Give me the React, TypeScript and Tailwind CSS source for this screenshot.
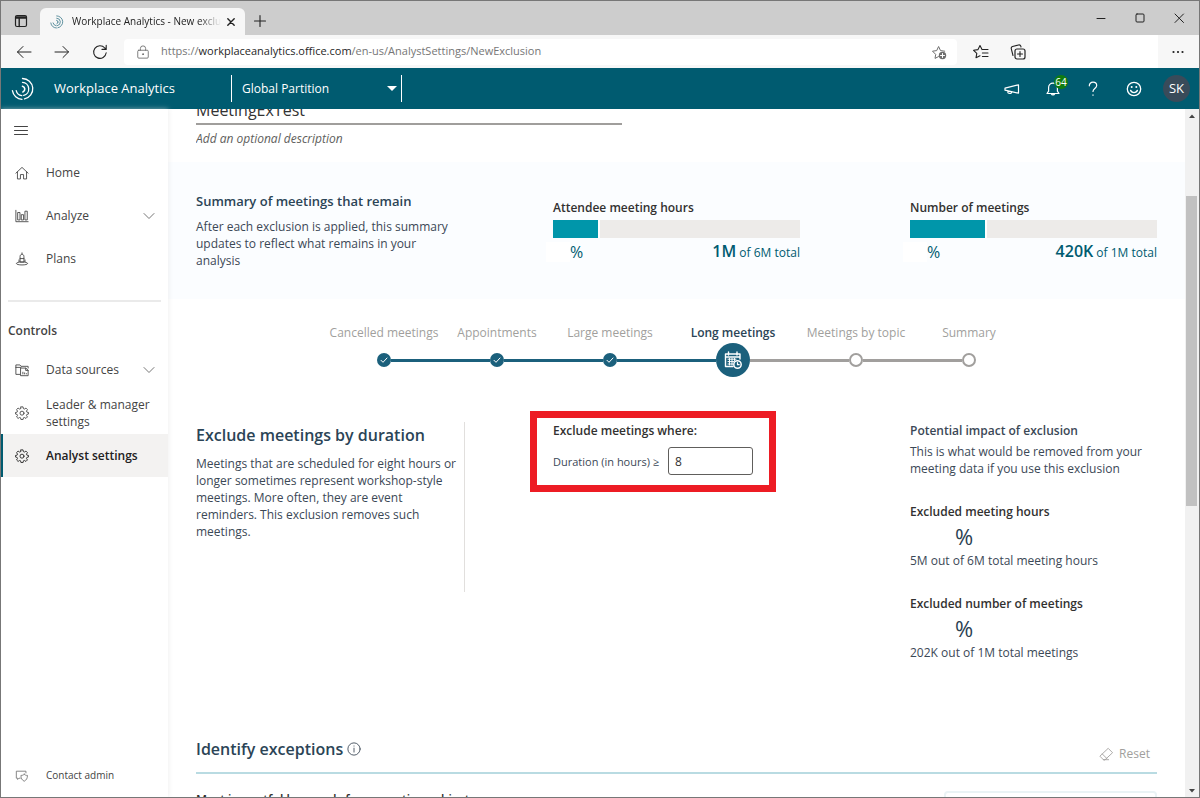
import React, { useState } from 'react';
import clsx from 'clsx';

interface IconProps {
    className?: string;
}

interface NavItem {
    label: string;
    icon: React.ReactNode;
    expandable?: boolean;
    active?: boolean;
}

interface Step {
    label: string;
    state: 'done' | 'current' | 'todo';
}

interface MeterProps {
    title: string;
    percent: number;
    amount: string;
    total: string;
}

interface ImpactProps {
    title: string;
    detail: string;
}

function Svg({ className = 'size-4', box = 16, children }: IconProps & { box?: number; children: React.ReactNode }) {
    return (
        <svg
            viewBox={`0 0 ${box} ${box}`}
            className={clsx('shrink-0', className)}
            fill="none"
            stroke="currentColor"
            strokeLinecap="round"
            strokeLinejoin="round"
            aria-hidden="true"
        >
            {children}
        </svg>
    );
}

function Logo({ className }: IconProps) {
    return (
        <Svg className={className} box={24}>
            <path d="M11.5 1.5a10.3 10.3 0 0 1 2 20.4M11 22.3a10.3 10.3 0 0 1-9.600-8.600" strokeWidth="1.3" />
            <path d="M11.5 5.400a6.600 6.600 0 0 1 1.200 13M10.800 18.600a6.600 6.600 0 0 1-5.600-5" strokeWidth="1.3" />
            <path d="M11.5 9.200a3 3 0 0 1 .4 5.700" strokeWidth="1.600" />
        </Svg>
    );
}

const HomeIcon = () => (
    <Svg className="size-3.5">
        <path d="M1 8.2 8 1.6l7 6.6M2.8 6.8v8h3.4v-5h3.6v5h3.4v-8" />
    </Svg>
);

const AnalyzeIcon = () => (
    <Svg className="size-3.5">
        <path d="M1 1.5v13h14M3.5 4h2.2v8.5H3.5zM7.6 6.5h2.2v6H7.6zM11.8 2.5H14v10h-2.2z" />
    </Svg>
);

const PlansIcon = () => (
    <Svg className="size-3.5">
        <path d="M8 1v1.5M5.8 11V5.2C5.8 3.6 6.8 2.6 8 2.6s2.2 1 2.2 2.6V11zM5.800 7.500h4.400" />
        <path d="M4.6 9v2.5h6.8V9M4.2 11.7c-1.6.3-2.6.8-2.6 1.4 0 1 2.8 1.7 6.4 1.7s6.4-.7 6.4-1.7c0-.6-1-1.1-2.6-1.4" />
    </Svg>
);

const DataIcon = () => (
    <Svg className="size-3.5">
        <path d="M5.5 13H1V2.2h4.6l1.3 1.6H15v2M1 5h5.8" />
        <path d="M6.8 5.8h5.6L15 8.3v6.2H6.8zM12.2 6v2.5H15M9 12.5v-2M11 12.5v-1.2M13 12.5v-.4" />
    </Svg>
);

const GearIcon = () => (
    <Svg className="size-3.5">
        <path d="m6.8 1h2.4l.4 2 1.1.5 1.8-1.1 1.7 1.7-1.1 1.8.5 1.1 1.9.4v1.7l-1.9.5-.5 1.1 1.1 1.8-1.7 1.7-1.8-1.1-1.1.4-.4 2H6.8l-.4-2-1.1-.4-1.8 1.1-1.7-1.7 1.1-1.8-.5-1.1-1.9-.5V7.4L2.4 7l.5-1.1-1.1-1.8 1.7-1.7 1.8 1.1L6.4 3z" />
        <circle cx="8" cy="8.2" r="2.3" />
    </Svg>
);

const ContactIcon = () => (
    <Svg className="size-3.5 text-[#767676]">
        <path d="M6 10.5H4.500L3 12v-1.500H1.500v-8h11v2" />
        <path d="M10.500 6c1 1 2.200 1.400 3.700 1.300.1 3.200-1.100 5.300-3.700 6.700-2.600-1.400-3.800-3.500-3.700-6.700C8.300 7.400 9.500 7 10.500 6z" />
    </Svg>
);

const mainNav: NavItem[] = [
    { label: 'Home', icon: <HomeIcon /> },
    { label: 'Analyze', icon: <AnalyzeIcon />, expandable: true },
    { label: 'Plans', icon: <PlansIcon /> }
];

const controlsNav: NavItem[] = [
    { label: 'Data sources', icon: <DataIcon />, expandable: true },
    { label: 'Leader & manager settings', icon: <GearIcon /> },
    { label: 'Analyst settings', icon: <GearIcon />, active: true }
];

const steps: Step[] = [
    { label: 'Cancelled meetings', state: 'done' },
    { label: 'Appointments', state: 'done' },
    { label: 'Large meetings', state: 'done' },
    { label: 'Long meetings', state: 'current' },
    { label: 'Meetings by topic', state: 'todo' },
    { label: 'Summary', state: 'todo' }
];

function BrowserChrome() {
    return (
        <div className="shrink-0">
            <div className="flex h-[34px] items-center bg-[#cdcdcd] pl-[13px] text-[#222]">
                <button type="button" aria-label="Tab actions" className="mt-1.5">
                    <Svg className="size-3.5" box={14}>
                        <rect x="1.5" y="1.5" width="11" height="11" rx="1.5" strokeWidth="1.2" />
                        <path d="M2 3h10M2 4h10M5.2 4.5v8" strokeWidth="1.4" />
                    </Svg>
                </button>
                <div className="ml-3 flex h-[27px] w-[205px] items-center self-end rounded-t-md bg-[#f7f7f7] pr-2 pl-2.5">
                    <Logo className="size-3.5 text-[#2f7284]" />
                    <span className="ml-2 flex-1 mask-r-from-85% text-[10px] whitespace-nowrap">
                        Workplace Analytics - New exclu
                    </span>
                    <button type="button" aria-label="Close tab" className="ml-1">
                        <Svg className="size-3" box={12}>
                            <path d="m2.8 2.8 6.4 6.4M9.2 2.8 2.8 9.2" strokeWidth="1.4" />
                        </Svg>
                    </button>
                </div>
                <button type="button" aria-label="New tab" className="mt-1.5 ml-2">
                    <Svg className="size-3.5" box={14}>
                        <path d="M7 1.5v11M1.5 7h11" strokeWidth="1.1" />
                    </Svg>
                </button>
                <div className="mr-[13px] ml-auto flex gap-[25px]">
                    <button type="button" aria-label="Minimize">
                        <Svg className="size-3.5" box={14}><path d="M3 7.5h8" /></Svg>
                    </button>
                    <button type="button" aria-label="Maximize">
                        <Svg className="size-3.5" box={14}><rect x="3" y="3" width="8" height="8" rx="1" /></Svg>
                    </button>
                    <button type="button" aria-label="Close">
                        <Svg className="size-3.5" box={14}><path d="m3 3 8.5 8.5M11.5 3 3 11.5" /></Svg>
                    </button>
                </div>
            </div>

            <div className="flex h-[33px] items-center bg-[#f7f7f7] text-[#222]">
                <div className="flex items-center gap-[22px] pl-[15px]">
                    <button type="button" aria-label="Back">
                        <Svg><path d="M15 8H1.5M7 2.5 1.5 8 7 13.5" /></Svg>
                    </button>
                    <button type="button" aria-label="Forward">
                        <Svg><path d="M1 8h13.5M9 2.5 14.5 8 9 13.5" /></Svg>
                    </button>
                    <button type="button" aria-label="Refresh">
                        <Svg><path d="M14.2 8.8A6.3 6.3 0 1 1 12.8 4L14 5.2M14.2 1.2v4.2H10" strokeWidth="1.1" /></Svg>
                    </button>
                </div>
                <div className="ml-4 flex h-[26px] flex-1 items-center rounded bg-white px-2.5 text-[#6e6e6e]">
                    <Svg className="ml-0.5 size-3.5">
                        <rect x="2" y="6" width="12" height="9" rx="1.2" />
                        <path d="M5 6V4a3 3 0 0 1 6 0v2" />
                        <circle cx="8" cy="10.5" r=".6" fill="currentColor" />
                    </Svg>
                    <span className="ml-[11px] flex-1 text-[11px] text-[#767676]">
                        https://<span className="text-[#1f1f1f]">workplaceanalytics.office.com</span>/en-us/AnalystSettings/NewExclusion
                    </span>
                    <button type="button" aria-label="Add to favorites">
                        <Svg>
                            <path d="M7.5 12.6 4 14.4l.7-4L1.5 7.2l4.2-.6L7.6 2.5l1.9 4.1 4.2.6" />
                            <circle cx="11.5" cy="11.5" r="3.7" fill="currentColor" stroke="none" />
                            <path d="M11.5 9.5v4M9.5 11.5h4" stroke="white" />
                        </Svg>
                    </button>
                </div>
                <div className="flex h-full items-center gap-[21px] pr-1 pl-4">
                    <button type="button" aria-label="Favorites">
                        <Svg>
                            <path d="m9 5.6-2-4-2 4-4.4.7 3.2 3.1-.8 4.4 4-2M9.4 5.5H15M9.4 9H15M9.4 12.5H15" strokeWidth="1.1" />
                        </Svg>
                    </button>
                    <button type="button" aria-label="Collections">
                        <Svg>
                            <rect x="5" y="5" width="10" height="10" rx="2" strokeWidth="1.2" />
                            <path d="M10 7.5v5M7.5 10h5M3 11.500 1.300 4.800c-.3-1.200.2-2 1.200-2.300l6-1.500c1.200-.3 2 .2 2.300 1.200l.2.800" strokeWidth="1.1" />
                        </Svg>
                    </button>
                </div>
                <div className="h-full w-[128px] bg-white" />
                <button type="button" aria-label="Settings and more" className="pr-[9px] pl-2">
                    <Svg className="size-6" box={24}>
                        <path d="M7.5 12h.01M12 12h.01M16.5 12h.01" strokeWidth="2.2" />
                    </Svg>
                </button>
            </div>
        </div>
    );
}

function AppHeader() {
    return (
        <header className="flex h-[41px] shrink-0 items-center bg-[#005b70] pl-2.5 text-white">
            <Logo className="size-6" />
            <span className="ml-[19px] w-[177px] text-[13px] font-medium">Workplace Analytics</span>
            <div className="relative flex h-[27px] w-[171px] items-center border-x border-white">
                <select
                    aria-label="Partition"
                    className="h-full w-full appearance-none bg-transparent pl-2.5 text-[12px] font-medium outline-none"
                >
                    <option>Global Partition</option>
                </select>
                <svg viewBox="0 0 10 5" className="pointer-events-none absolute right-1 h-[5px] w-2.5" fill="currentColor" aria-hidden="true">
                    <path d="M0 0h10L5 5z" />
                </svg>
            </div>
            <div className="mr-[9px] ml-auto flex items-center">
                <button type="button" aria-label="Announcements">
                    <Svg><path d="M1 7.2v2l13.5 3V3.8zM3.8 9.8v1.4c0 1.5 3.800 1.500 3.800.2v-.8" strokeWidth="1.2" /></Svg>
                </button>
                <button type="button" aria-label="Notifications" className="relative ml-[25px]">
                    <Svg>
                        <path d="M2 12.5h12l-1.6-2.3V6.5a4.4 4.4 0 0 0-8.8 0v3.7zM6.3 12.7a1.8 1.8 0 0 0 3.4 0" strokeWidth="1.2" />
                    </Svg>
                    <span className="absolute -top-1.5 left-[9px] flex size-3.5 items-center justify-center rounded-full bg-[#107c10] text-[10px] leading-none font-medium">
                        64
                    </span>
                </button>
                <button type="button" aria-label="Help" className="ml-6">
                    <Svg>
                        <path d="M4.3 4.8C4.3 2.7 5.8 1.2 8 1.2s3.7 1.3 3.7 3.3c0 2.9-3.7 3.2-3.7 6M8 13.8v.5" strokeWidth="1.2" />
                    </Svg>
                </button>
                <button type="button" aria-label="Feedback" className="ml-[25px]">
                    <Svg>
                        <circle cx="8" cy="8" r="6.7" strokeWidth="1.3" />
                        <path d="M4.6 9.300c1 3 5.800 3 6.800 0" strokeWidth="1.3" />
                        <path d="M5.7 6h.01M10.3 6h.01" strokeWidth="2" />
                    </Svg>
                </button>
                <span className="ml-[21px] flex size-[27px] items-center justify-center rounded-full bg-[#394b5a] text-[13px]">SK</span>
            </div>
        </header>
    );
}

function NavList({ items }: { items: NavItem[] }) {
    return (
        <ul>
            {items.map((item) => (
                <li key={item.label}>
                    <a
                        href="#"
                        className={clsx(
                            'flex h-[43px] items-center border-l-2 pr-[13px] pl-3',
                            item.active ? 'border-[#005b70] bg-[#f3f2f1] font-semibold text-[#212121]' : 'border-transparent'
                        )}
                    >
                        {item.icon}
                        <span className="ml-[17px] flex-1">{item.label}</span>
                        {item.expandable && (
                            <Svg className="size-3 text-[#767676]" box={12}>
                                <path d="M1 3.500 6 8.500l5-5" />
                            </Svg>
                        )}
                    </a>
                </li>
            ))}
        </ul>
    );
}

function Sidebar() {
    return (
        <nav className="relative z-10 flex w-[167px] shrink-0 flex-col bg-white text-[12px] leading-[17px] text-[#444] shadow-[0_0_5px_#dddddd99]">
            <button type="button" aria-label="Toggle navigation" className="flex h-[42px] items-center pl-[13px]">
                <Svg className="size-3.5" box={14}>
                    <path d="M.5 3.500h13M.5 7.500h13M.5 11.500h13" />
                </Svg>
            </button>
            <NavList items={mainNav} />
            <div className="my-5 mr-[7px] ml-[7px] h-0.5 bg-[#eaeaea]" />
            <h2 className="mb-2 pl-[7px] leading-[18px] font-semibold">Controls</h2>
            <NavList items={controlsNav} />
            <a href="#" className="mt-auto flex h-[43px] items-center pl-3.5 text-[10px]">
                <ContactIcon />
                <span className="ml-[17px]">Contact admin</span>
            </a>
        </nav>
    );
}

function Meter({ title, percent, amount, total }: MeterProps) {
    return (
        <div className="pt-[7px]">
            <h3 className="text-[12px] leading-[17px] font-semibold text-[#323130]">{title}</h3>
            <div className="mt-1 h-[18px] bg-[#edebe9]">
                <div className="h-full border-r-2 border-white bg-[#0096aa]" style={{ width: `${percent}%` }} />
            </div>
            <div className="mt-[3px] flex items-center leading-5 text-[#005b70]">
                <span className="-ml-[7px] h-5 w-6 bg-white" />
                <span className="text-[16px]">%</span>
                <span className="ml-auto text-[12px]">
                    <span className="text-[16px] font-semibold">{amount}</span> of {total} total
                </span>
            </div>
        </div>
    );
}

function StepMarker({ state }: { state: Step['state'] }) {
    if (state === 'done') {
        return (
            <span className="flex size-3.5 items-center justify-center rounded-full bg-[#1b607c] text-white">
                <Svg className="size-2.5" box={10}><path d="M2 5.3 4 7.3 8 3" /></Svg>
            </span>
        );
    }
    if (state === 'current') {
        return (
            <span className="flex size-[34px] items-center justify-center rounded-full bg-[#1b607c] text-white">
                <Svg className="size-[18px]" box={18}>
                    <path d="M16 8V3H1.5v12.5H9M1.5 6H16M4.5 1v3M13 1v3" strokeWidth="1.4" />
                    <path d="M4 8.2h8M4 10.6h6M4 13h4.5M5.5 7.5V14M8 7.500V14M10.500 7.500v2" />
                    <circle cx="13.5" cy="13.5" r="3.7" fill="#1b607c" strokeWidth="1.5" />
                    <path d="M13.5 11.5v2.200h1.700" strokeWidth="1.2" />
                </Svg>
            </span>
        );
    }
    return <span className="size-3.5 rounded-full border-2 border-[#a19f9d] bg-white" />;
}

function Stepper() {
    return (
        <ol className="flex justify-center pt-[25px]">
            {steps.map((step, i) => {
                const current = step.state === 'current';
                return (
                    <li key={step.label} className={clsx('text-center', current ? 'w-[133px]' : 'w-[113px]')}>
                        <p
                            className={clsx(
                                'text-[12px] leading-[17px] whitespace-nowrap',
                                current ? 'font-semibold text-[#2b4456]' : 'text-[#a19f9d]'
                            )}
                        >
                            {step.label}
                        </p>
                        <div className="mt-0.5 flex h-[34px] items-center">
                            <span className={clsx('h-[3px] flex-1', i === 0 ? '' : step.state === 'todo' ? 'bg-[#a19f9d]' : 'bg-[#1b607c]')} />
                            <StepMarker state={step.state} />
                            <span className={clsx('h-[3px] flex-1', i === steps.length - 1 ? '' : step.state === 'done' ? 'bg-[#1b607c]' : 'bg-[#a19f9d]')} />
                        </div>
                    </li>
                );
            })}
        </ol>
    );
}

function Impact({ title, detail }: ImpactProps) {
    return (
        <div className="mt-[26px]">
            <h4 className="font-semibold text-[#323130]">{title}</h4>
            <p className="mt-0.5 mb-0.5 pl-[45px] text-[22px] leading-7 text-[#2b3f52]">%</p>
            <p>{detail}</p>
        </div>
    );
}

function App() {
    const [name, setName] = useState('MeetingExTest');
    const [description, setDescription] = useState('');
    const [duration, setDuration] = useState('8');

    return (
        <div className="flex h-screen flex-col overflow-hidden border border-[#777] bg-white font-['Open_Sans',sans-serif]">
            <BrowserChrome />
            <AppHeader />
            <div className="flex min-h-0 flex-1">
                <Sidebar />
                <main className="min-w-0 flex-1 overflow-hidden text-[12px] leading-[17px] text-[#3b4856]">
                    <div className="-mt-3.5 flex flex-col px-7 pb-[15px]">
                        <input
                            aria-label="Exclusion name"
                            value={name}
                            onChange={(e) => setName(e.target.value)}
                            className="h-[30px] w-[426px] border-b-2 border-[#a09e9c] pt-0.5 text-[16px] text-[#333] outline-none"
                        />
                        <input
                            aria-label="Description"
                            placeholder="Add an optional description"
                            value={description}
                            onChange={(e) => setDescription(e.target.value)}
                            className="mt-1 h-[18px] w-[426px] italic outline-none placeholder:text-[#605e5c]"
                        />
                    </div>

                    <section className="grid h-[137px] grid-cols-3 gap-x-[110px] bg-[#fbfdff] px-7 pt-[30px]">
                        <div className="whitespace-nowrap">
                            <h2 className="text-[13px] leading-[18px] font-semibold text-[#2b4456]">Summary of meetings that remain</h2>
                            <p className="mt-2">
                                After each exclusion is applied, this summary
                                <br />
                                updates to reflect what remains in your
                                <br />
                                analysis
                            </p>
                        </div>
                        <Meter title="Attendee meeting hours" percent={19} amount="1M" total="6M" />
                        <Meter title="Number of meetings" percent={31} amount="420K" total="1M" />
                    </section>

                    <Stepper />

                    <section className="mt-[45px] grid grid-cols-3 gap-x-[110px] px-7">
                        <div className="-mr-[22px] min-h-[170px] self-start border-r border-[#e1dfdd] whitespace-nowrap">
                            <h2 className="text-[16px] leading-[26px] font-semibold text-[#2b4456]">Exclude meetings by duration</h2>
                            <p className="mt-[7px]">
                                Meetings that are scheduled for eight hours or
                                <br />
                                longer sometimes represent workshop-style
                                <br />
                                meetings. More often, they are event
                                <br />
                                reminders. This exclusion removes such
                                <br />
                                meetings.
                            </p>
                        </div>
                        <div className="-mt-[11px] -mr-[23px] -ml-[23px] w-[246px] self-start border-7 border-[#ed1c24] px-4 pt-1 pb-2.5">
                            <h3 className="font-semibold text-[#323130]">Exclude meetings where:</h3>
                            <div className="mt-2 flex items-center">
                                <label htmlFor="duration" className="flex-1 text-[11px] whitespace-nowrap">Duration (in hours) ≥</label>
                                <input
                                    id="duration"
                                    value={duration}
                                    onChange={(e) => setDuration(e.target.value)}
                                    className="h-7 w-[85px] rounded-[3px] border border-[#605e5c] px-1.5 text-[#323130] outline-none"
                                />
                            </div>
                        </div>
                        <div>
                            <h3 className="font-semibold">Potential impact of exclusion</h3>
                            <p className="mt-1">This is what would be removed from your meeting data if you use this exclusion</p>
                            <Impact title="Excluded meeting hours" detail="5M out of 6M total meeting hours" />
                            <Impact title="Excluded number of meetings" detail="202K out of 1M total meetings" />
                        </div>
                    </section>

                    <section className="mx-7 mt-[75px]">
                        <div className="flex items-end border-b-2 border-[#b9dbe2] pb-2.5">
                            <h2 className="text-[16px] leading-[26px] font-semibold text-[#2b4456]">Identify exceptions</h2>
                            <button type="button" aria-label="About exceptions" className="mb-1.5 ml-1">
                                <Svg className="size-3.5">
                                    <circle cx="8" cy="8" r="7" />
                                    <path d="M8 7v4.5M8 4.5v.2" />
                                </Svg>
                            </button>
                            <button type="button" className="mr-[7px] ml-auto flex items-center gap-1.5 text-[#a19f9d]">
                                <Svg className="size-3.5">
                                    <path d="M5 14.5 1 10.5 10.5 1.5l5 5-8.5 8zM3.8 8l5 5M5 14.5h6" />
                                </Svg>
                                Reset
                            </button>
                        </div>
                        <div className="flex items-start justify-between pt-[17px]">
                            <h3 className="font-semibold text-[#323130]">Most impactful keywords from meeting subject</h3>
                            <div className="h-8 w-[213px] rounded-sm border-2 border-[#eaf3f5]" />
                        </div>
                    </section>
                </main>

                <div className="flex w-3.5 shrink-0 flex-col bg-[#f1f1f1] text-[#444]">
                    <svg viewBox="0 0 14 14" className="size-3.5" fill="currentColor" aria-hidden="true">
                        <path d="M7 5.5 10 9H4z" />
                    </svg>
                    <div className="flex flex-1 flex-col">
                        <div className="h-[11%]" />
                        <div className="mr-0.5 ml-px h-[47%] bg-[#c1c1c1]" />
                    </div>
                    <svg viewBox="0 0 14 14" className="size-3.5" fill="currentColor" aria-hidden="true">
                        <path d="M7 9.5 10 6H4z" />
                    </svg>
                </div>
            </div>
        </div>
    );
}

export default App;
